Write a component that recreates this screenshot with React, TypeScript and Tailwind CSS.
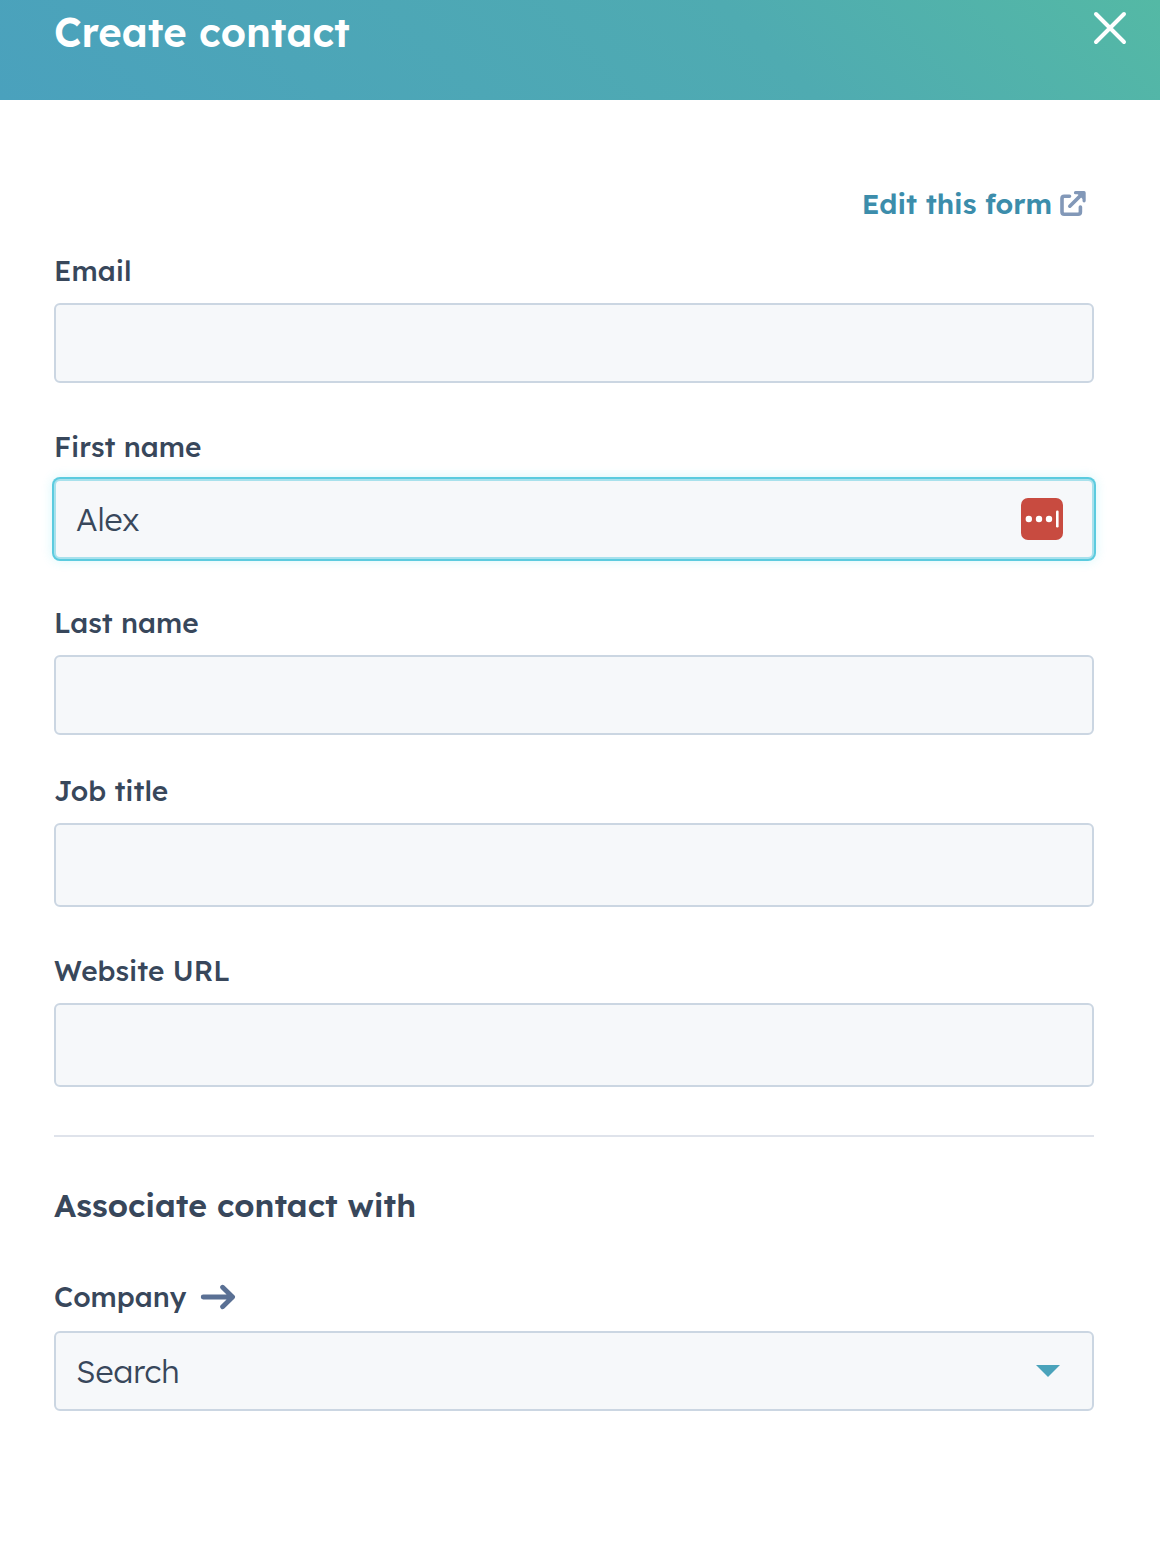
import { useState } from "react";

type FieldProps = {
  id: string;
  label: string;
  type?: string;
  initial?: string;
  tall?: boolean;
  active?: boolean;
  className?: string;
};

function PasswordManagerIcon() {
  return (
    <svg width="42" height="42" viewBox="0 0 42 42" aria-hidden="true">
      <rect width="42" height="42" rx="7" fill="#c84b40" />
      <circle cx="7.8" cy="21" r="3.2" fill="#fff" />
      <circle cx="18" cy="21" r="3.2" fill="#fff" />
      <circle cx="28" cy="21" r="3.2" fill="#fff" />
      <rect x="35" y="12.5" width="2.6" height="17" rx="1.2" fill="#fff" />
    </svg>
  );
}

function Field({ id, label, type = "text", initial = "", tall, active, className = "mt-11" }: FieldProps) {
  const [value, setValue] = useState(initial);
  return (
    <div className={className}>
      <label htmlFor={id} className="mb-3 block text-[28px] leading-10 font-medium">
        {label}
      </label>
      <div className="relative">
        <input
          id={id}
          type={type}
          value={value}
          onChange={(e) => setValue(e.target.value)}
          className={`block w-full rounded-md border-2 bg-[#f6f8fa] px-5 text-[32px] font-light outline-none ${
            tall ? "h-[84px]" : "h-20"
          } ${
            active
              ? "border-[#a8e1ec] shadow-[0_0_0_2px_#5bcbdf,0_0_12px_2px_rgba(0,208,228,0.16)]"
              : "border-[#cbd6e2]"
          }`}
        />
        {active && (
          <button type="button" aria-label="Fill from password manager" className="absolute top-[19px] right-[31px]">
            <PasswordManagerIcon />
          </button>
        )}
      </div>
    </div>
  );
}

export default function App() {
  return (
    <div className="min-h-screen bg-white font-['Lexend_Deca','Inter',sans-serif] text-[#38475b]">
      <header className="flex h-[100px] items-start justify-between bg-[linear-gradient(45deg,#4aa1bd,#4fabb1_65%,#54b9a5)] pr-8 pl-[54px] text-white">
        <h1 className="mt-2 text-[40px] leading-12 font-semibold">Create contact</h1>
        <button type="button" aria-label="Close" className="mt-2.5">
          <svg width="36" height="36" viewBox="0 0 36 36" fill="none" stroke="#fff" strokeWidth="4" strokeLinecap="round">
            <path d="M4 4 32 32M32 4 4 32" />
          </svg>
        </button>
      </header>

      <form className="pr-[66px] pb-36 pl-[54px]" onSubmit={(e) => e.preventDefault()}>
        <div className="mt-[84px] flex justify-end pr-2">
          <a href="#edit-form" className="flex items-center gap-2 text-[28px] leading-10 font-semibold text-[#3c8dab]">
            Edit this form
            <svg
              width="26"
              height="26"
              viewBox="0 0 26 26"
              fill="none"
              stroke="#8298b8"
              strokeWidth="3.6"
              strokeLinecap="round"
              strokeLinejoin="round"
              aria-hidden="true"
            >
              <path d="M9.5 5.2H4.2Q2 5.2 2 7.4V21Q2 23.2 4.2 23.2H18.2Q20.4 23.2 20.4 21V16" />
              <path d="M9.8 15.2 22.5 2.6" />
              <path d="M15.5 1.7H24.1V9.8" strokeWidth="3.2" />
              <path d="M16.5 2H23.7V9Z" fill="#8298b8" stroke="none" />
            </svg>
          </a>
        </div>

        <Field id="email" label="Email" type="email" className="mt-[27px]" />
        <Field id="first-name" label="First name" initial="Alex" active />
        <Field id="last-name" label="Last name" />
        <Field id="job-title" label="Job title" tall className="mt-9" />
        <Field id="website" label="Website URL" type="url" tall />

        <hr className="mt-12 border-t-2 border-[#dfe3eb]" />

        <h2 className="mt-12 text-[32px] leading-10 font-semibold">Associate contact with</h2>

        <div className="mt-[52px]">
          <div className="mb-3.5 flex items-center gap-3.5">
            <label htmlFor="company" className="text-[28px] leading-10 font-medium">
              Company
            </label>
            <svg
              width="36"
              height="26"
              viewBox="0 0 36 26"
              fill="none"
              stroke="#5a7094"
              strokeWidth="4.8"
              strokeLinecap="round"
              strokeLinejoin="round"
              aria-hidden="true"
            >
              <path d="M3.2 13H32M22.6 3.2 32.6 13 22.6 22.8" />
            </svg>
          </div>
          <div className="relative">
            <select
              id="company"
              className="block h-20 w-full appearance-none rounded-md border-2 border-[#cbd6e2] bg-[#f6f8fa] px-5 text-[32px] font-light outline-none"
            >
              <option>Search</option>
            </select>
            <svg
              width="24"
              height="12"
              viewBox="0 0 24 12"
              className="pointer-events-none absolute top-[34px] right-[34px]"
              aria-hidden="true"
            >
              <path d="M0 0H24L12 12Z" fill="#4aa3bb" />
            </svg>
          </div>
        </div>
      </form>
    </div>
  );
}
